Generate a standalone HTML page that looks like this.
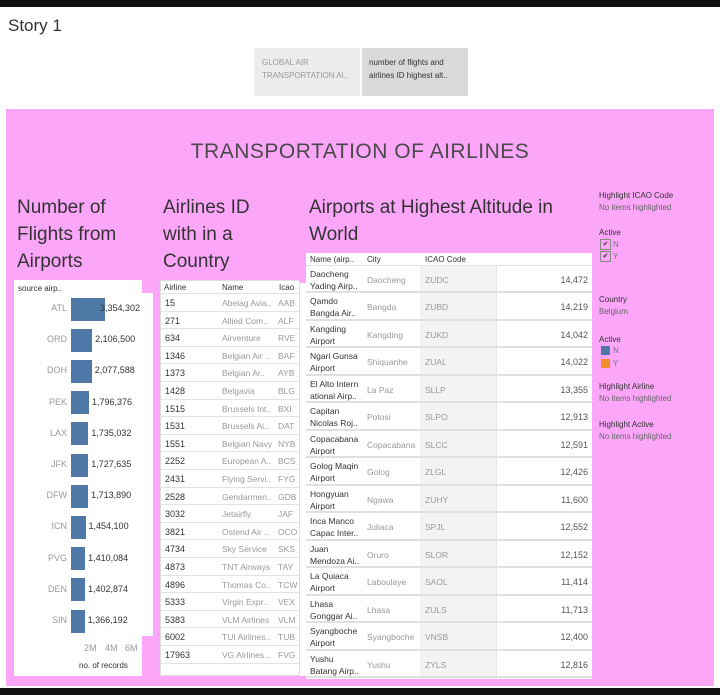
<!DOCTYPE html>
<html><head><meta charset="utf-8">
<style>
*{margin:0;padding:0;box-sizing:border-box}
body{width:720px;height:695px;background:#fff;position:relative;overflow:hidden;font-family:"Liberation Sans",sans-serif;color:#333}
.a{position:absolute;white-space:nowrap}
.pink{background:#fca6fa}
.t9{font-size:9px}
.g{color:#999}
.row{position:absolute;left:0;right:0;border-bottom:1px solid #e2e2e2}
</style></head><body>
<div class="a" style="left:0;top:0;width:720px;height:7px;background:#111"></div>
<div class="a" style="left:0;top:688px;width:720px;height:7px;background:#111"></div>
<div class="a" style="left:8px;top:16px;font-size:17px;color:#333">Story 1</div>
<div class="a" style="left:254px;top:48px;width:106px;height:48px;background:#ececec"></div>
<div class="a t9 g" style="left:262px;top:56px;font-size:8px;line-height:13px">GLOBAL AIR<br>TRANSPORTATION AI..</div>
<div class="a" style="left:362px;top:48px;width:106px;height:48px;background:#dadada"></div>
<div class="a" style="left:369px;top:56px;font-size:8px;line-height:13px;color:#333">number of flights and<br>airlines ID highest alt..</div>

<div class="a pink" style="left:6px;top:109px;width:708px;height:577px"></div>
<div class="a" style="left:0;top:140px;width:720px;text-align:center;font-size:21px;color:#4a4a4a;letter-spacing:0.5px">TRANSPORTATION OF AIRLINES</div>

<div class="a" style="left:17px;top:194px;font-size:19px;line-height:27px;color:#333">Number of<br>Flights from<br>Airports</div>
<div class="a" style="left:163px;top:194px;font-size:19px;line-height:27px;color:#333">Airlines ID<br>with in a<br>Country</div>
<div class="a" style="left:309px;top:194px;font-size:19px;line-height:27px;color:#333">Airports at Highest Altitude in<br>World</div>

<!-- bar chart -->
<div class="a" style="left:140px;top:293px;width:13px;height:343px;background:#fff"></div>
<div class="a" style="left:14px;top:280px;width:128px;height:396px;background:#fff"></div>
<div class="a" style="left:18px;top:284px;font-size:8px;color:#333">source airp..</div>
<div id="bars"></div>
<div class="a g" style="left:84px;top:643px;font-size:9px">2M</div>
<div class="a g" style="left:105px;top:643px;font-size:9px">4M</div>
<div class="a g" style="left:125px;top:643px;font-size:9px">6M</div>
<div class="a" style="left:79px;top:661px;font-size:8px;color:#333">no. of records</div>

<!-- airlines -->
<div class="a" style="left:295px;top:283px;width:13px;height:393px;background:#fff"></div>
<div class="a" style="left:160px;top:280px;width:140px;height:396px;background:#fff;border:1px solid #ddd" id="al"></div>

<!-- airports -->
<div class="a" style="left:306px;top:253px;width:286px;height:426px;background:#fff" id="ap"></div>

<!-- legends -->
<div class="a" style="left:599px;top:190px;font-size:8px;line-height:12px">Highlight ICAO Code<br><span style="color:#666">No items highlighted</span></div>
<div class="a" style="left:599px;top:228px;font-size:8px">Active</div>
<div class="a" style="left:600px;top:239px;width:11px;height:11px;border:1px solid #888;font-size:7px;text-align:center;line-height:9px">✔</div>
<div class="a" style="left:613px;top:240px;font-size:8px;color:#777">N</div>
<div class="a" style="left:600px;top:251px;width:11px;height:11px;border:1px solid #888;font-size:7px;text-align:center;line-height:9px">✔</div>
<div class="a" style="left:613px;top:252px;font-size:8px;color:#777">Y</div>
<div class="a" style="left:599px;top:294px;font-size:8px;line-height:12px">Country<br><span style="color:#666">Belgium</span></div>
<div class="a" style="left:599px;top:335px;font-size:8px">Active</div>
<div class="a" style="left:601px;top:346px;width:9px;height:9px;background:#4e79a7"></div>
<div class="a" style="left:613px;top:346px;font-size:8px;color:#777">N</div>
<div class="a" style="left:601px;top:359px;width:9px;height:9px;background:#f28e2b"></div>
<div class="a" style="left:613px;top:359px;font-size:8px;color:#777">Y</div>
<div class="a" style="left:599px;top:381px;font-size:8px;line-height:12px">Highlight Airline<br><span style="color:#666">No items highlighted</span></div>
<div class="a" style="left:599px;top:419px;font-size:8px;line-height:12px">Highlight Active<br><span style="color:#666">No items highlighted</span></div>

<script>
var bars=[["ATL",3354302],["ORD",2106500],["DOH",2077588],["PEK",1796376],["LAX",1735032],["JFK",1727635],["DFW",1713890],["ICN",1454100],["PVG",1410084],["DEN",1402874],["SIN",1366192]];
var h="";
bars.forEach(function(b,i){var cy=309+i*31.2;var w=b[1]/1e6*10;
h+='<div class="a g" style="left:30px;width:37px;text-align:right;top:'+(cy-6)+'px;font-size:9px">'+b[0]+'</div>';
h+='<div class="a" style="left:71px;top:'+(cy-11.5)+'px;width:'+w+'px;height:23px;background:#4e79a7"></div>';
h+='<div class="a" style="left:'+(i==0?100:71+w+3)+'px;top:'+(cy-6)+'px;font-size:9px;color:#333">'+b[1].toLocaleString("en-US")+'</div>';});
document.getElementById("bars").innerHTML=h;
var al=[["15","Abelag Avia..","AAB"],["271","Allied Com..","ALF"],["634","Airventure","RVE"],["1346","Belgian Air ..","BAF"],["1373","Belgian Ar..","AYB"],["1428","Belgavia","BLG"],["1515","Brussels Int..","BXI"],["1531","Brussels Ai..","DAT"],["1551","Belgian Navy","NYB"],["2252","European A..","BCS"],["2431","Flying Servi..","FYG"],["2528","Gendarmeri..","GDB"],["3032","Jetairfly","JAF"],["3821","Ostend Air ..","OCO"],["4734","Sky Service","SKS"],["4873","TNT Airways","TAY"],["4896","Thomas Co..","TCW"],["5333","Virgin Expr..","VEX"],["5383","VLM Airlines","VLM"],["6002","TUI Airlines..","TUB"],["17963","VG Airlines ..","FVG"]];
h='<div class="row" style="top:0;height:13px"><span class="a" style="left:3px;top:2px;font-size:8px">Airline</span><span class="a" style="left:61px;top:2px;font-size:8px">Name</span><span class="a" style="left:118px;top:2px;font-size:8px">Icao</span></div>';
al.forEach(function(r,i){var t=13+i*17.6;h+='<div class="row" style="top:'+t+'px;height:17.6px"><span class="a" style="left:4px;top:4px;font-size:9px">'+r[0]+'</span><span class="a g" style="left:61px;top:4px;font-size:8.5px">'+r[1]+'</span><span class="a g" style="left:117px;top:4px;font-size:8.5px">'+r[2]+'</span></div>';});
document.getElementById("al").innerHTML=h;
var ap=[["Daocheng<br>Yading Airp..","Daocheng","ZUDC","14,472"],["Qamdo<br>Bangda Air..","Bangda","ZUBD","14,219"],["Kangding<br>Airport","Kangding","ZUKD","14,042"],["Ngari Gunsa<br>Airport","Shiquanhe","ZUAL","14,022"],["El Alto Intern<br>ational Airp..","La Paz","SLLP","13,355"],["Capitan<br>Nicolas Roj..","Potosi","SLPO","12,913"],["Copacabana<br>Airport","Copacabana","SLCC","12,591"],["Golog Maqin<br>Airport","Golog","ZLGL","12,426"],["Hongyuan<br>Airport","Ngawa","ZUHY","11,600"],["Inca Manco<br>Capac Inter..","Juliaca","SPJL","12,552"],["Juan<br>Mendoza Ai..","Oruro","SLOR","12,152"],["La Quiaca<br>Airport","Laboulaye","SAOL","11,414"],["Lhasa<br>Gonggar Ai..","Lhasa","ZULS","11,713"],["Syangboche<br>Airport","Syangboche","VNSB","12,400"],["Yushu<br>Batang Airp..","Yushu","ZYLS","12,816"]];
h='<div class="row" style="top:0;height:13px"><span class="a" style="left:4px;top:2px;font-size:8px">Name (airp..</span><span class="a" style="left:61px;top:2px;font-size:8px">City</span><span class="a" style="left:119px;top:2px;font-size:8px">ICAO Code</span></div>';
h+='<div class="a" style="left:114px;top:13px;width:76px;height:413px;background:#f3f3f3"></div><div class="a" style="left:190px;top:13px;width:1px;height:413px;background:#e6e6e6"></div>';
ap.forEach(function(r,i){var t=13+i*27.47;h+='<div class="row" style="top:'+t+'px;height:27.47px;border-bottom:2px solid #e0e0e0"><span class="a" style="left:4px;top:2px;font-size:8.5px;line-height:12px;white-space:nowrap">'+r[0]+'</span><span class="a g" style="left:61px;top:9px;font-size:8.5px">'+r[1]+'</span><span class="a g" style="left:119px;top:9px;font-size:8.5px">'+r[2]+'</span><span class="a" style="right:4px;top:9px;font-size:9px;color:#555">'+r[3]+'</span></div>';});
document.getElementById("ap").innerHTML=h;
</script>
</body></html>
